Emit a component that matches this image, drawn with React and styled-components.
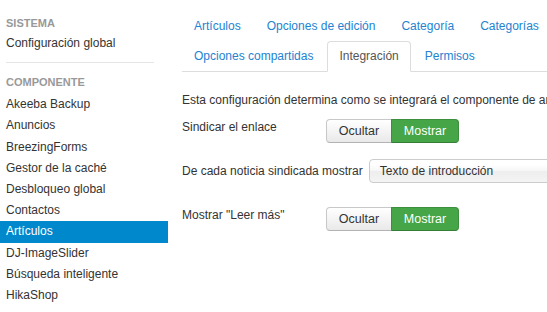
import React from "react";
import styled, { createGlobalStyle } from "styled-components";

const Global = createGlobalStyle`
  html, body { margin: 0; padding: 0; background: #fff; overflow: hidden; }
  body { font-family: "Liberation Sans", Arial, Helvetica, sans-serif; font-size: 12px; color: #333; }
  * { box-sizing: border-box; }
`;

const Page = styled.div`
  display: flex;
  align-items: flex-start;
  width: 900px;
`;

const Sidebar = styled.nav`
  width: 168px;
  flex: none;
  padding-top: 12px;
  display: flex;
  flex-direction: column;
`;

const NavHeader = styled.div`
  font-size: 11px;
  font-weight: bold;
  text-transform: uppercase;
  color: #999;
  line-height: 14px;
  padding: 4px 6px 3px;
`;

const NavList = styled.div`
  display: flex;
  flex-direction: column;
  margin-top: ${(p) => p.$mt || 0}px;
`;

const NavItem = styled.a`
  display: block;
  padding: 3px 6px;
  line-height: 15.2px;
  font-size: 12px;
  color: ${(p) => (p.$active ? "#fff" : "#333")};
  background: ${(p) => (p.$active ? "#0088cc" : "transparent")};
  text-decoration: none;
  white-space: nowrap;
`;

const Divider = styled.hr`
  border: 0;
  height: 1px;
  background: #e5e5e5;
  margin: 8px 14px 8px 6px;
`;

const Content = styled.main`
  margin-left: 14px;
  padding-top: 11px;
  width: 700px;
  display: flex;
  flex-direction: column;
`;

const Tabs = styled.ul`
  list-style: none;
  margin: 0;
  padding: 0;
  width: 400px;
  display: flex;
  flex-wrap: wrap;
  border-bottom: 1px solid #ddd;
`;

const Tab = styled.li`
  margin: 0 2px -1px 0;
  padding: 6px 11px;
  line-height: 17px;
  font-size: 12px;
  border: 1px solid ${(p) => (p.$active ? "#ddd" : "transparent")};
  border-bottom-color: ${(p) => (p.$active ? "#fff" : "transparent")};
  border-radius: 4px 4px 0 0;
  background: ${(p) => (p.$active ? "#fff" : "transparent")};
  color: ${(p) => (p.$active ? "#555" : "#2383d1")};
  white-space: nowrap;
`;

const Intro = styled.p`
  margin: 19px 0 10px;
  line-height: 18px;
  white-space: nowrap;
`;

const ControlGroup = styled.div`
  display: flex;
  align-items: ${(p) => (p.$center ? "center" : "flex-start")};
  margin-bottom: ${(p) => p.$mb || 16}px;
`;

const Label = styled.label`
  min-width: 138px;
  margin-right: 6px;
  line-height: 16px;
  white-space: nowrap;
`;

const BtnGroup = styled.div`
  display: flex;
`;

const Btn = styled.button`
  font-family: inherit;
  font-size: 12.5px;
  height: 24px;
  width: ${(p) => p.$w}px;
  padding: 0;
  line-height: 22px;
  cursor: pointer;
  border: 1px solid ${(p) => (p.$on ? "#3c8f3c" : "#c8c8c8")};
  border-bottom-color: ${(p) => (p.$on ? "#357e35" : "#b3b3b3")};
  background: ${(p) =>
    p.$on ? "#46a546" : "linear-gradient(#ffffff, #e9e9e9)"};
  color: ${(p) => (p.$on ? "#fff" : "#333")};
  border-radius: ${(p) => (p.$first ? "4px 0 0 4px" : "0 4px 4px 0")};
  margin-left: ${(p) => (p.$first ? 0 : -1)}px;
`;

const Select = styled.div`
  width: 240px;
  height: 24px;
  border: 1px solid #ccc;
  border-radius: 4px;
  padding: 0 10px;
  line-height: 22px;
  color: #333;
  background: linear-gradient(#fff 20%, #f6f6f6 50%, #eee 52%, #f4f4f4);
  white-space: nowrap;
`;

const Toggle = () => (
  <BtnGroup>
    <Btn $first $w={66}>Ocultar</Btn>
    <Btn $on $w={68}>Mostrar</Btn>
  </BtnGroup>
);

const items = [
  "Akeeba Backup",
  "Anuncios",
  "BreezingForms",
  "Gestor de la caché",
  "Desbloqueo global",
  "Contactos",
  "Artículos",
  "DJ-ImageSlider",
  "Búsqueda inteligente",
  "HikaShop",
];

const tabs = [
  "Artículos",
  "Opciones de edición",
  "Categoría",
  "Categorías",
  "Opciones compartidas",
  "Integración",
  "Permisos",
];

export default function App() {
  return (
    <>
      <Global />
      <Page>
        <Sidebar>
          <NavHeader>Sistema</NavHeader>
          <NavList>
            <NavItem>Configuración global</NavItem>
          </NavList>
          <Divider />
          <NavHeader>Componente</NavHeader>
          <NavList $mt={2}>
            {items.map((t) => (
              <NavItem key={t} $active={t === "Artículos"}>
                {t}
              </NavItem>
            ))}
          </NavList>
        </Sidebar>
        <Content>
          <Tabs>
            {tabs.map((t) => (
              <Tab key={t} $active={t === "Integración"}>
                {t}
              </Tab>
            ))}
          </Tabs>
          <Intro>
            Esta configuración determina como se integrará el componente de artículos con otras extensiones.
          </Intro>
          <ControlGroup>
            <Label>Sindicar el enlace</Label>
            <Toggle />
          </ControlGroup>
          <ControlGroup $center $mb={24}>
            <Label>De cada noticia sindicada mostrar</Label>
            <Select>Texto de introducción</Select>
          </ControlGroup>
          <ControlGroup>
            <Label>Mostrar "Leer más"</Label>
            <Toggle />
          </ControlGroup>
        </Content>
      </Page>
    </>
  );
}
